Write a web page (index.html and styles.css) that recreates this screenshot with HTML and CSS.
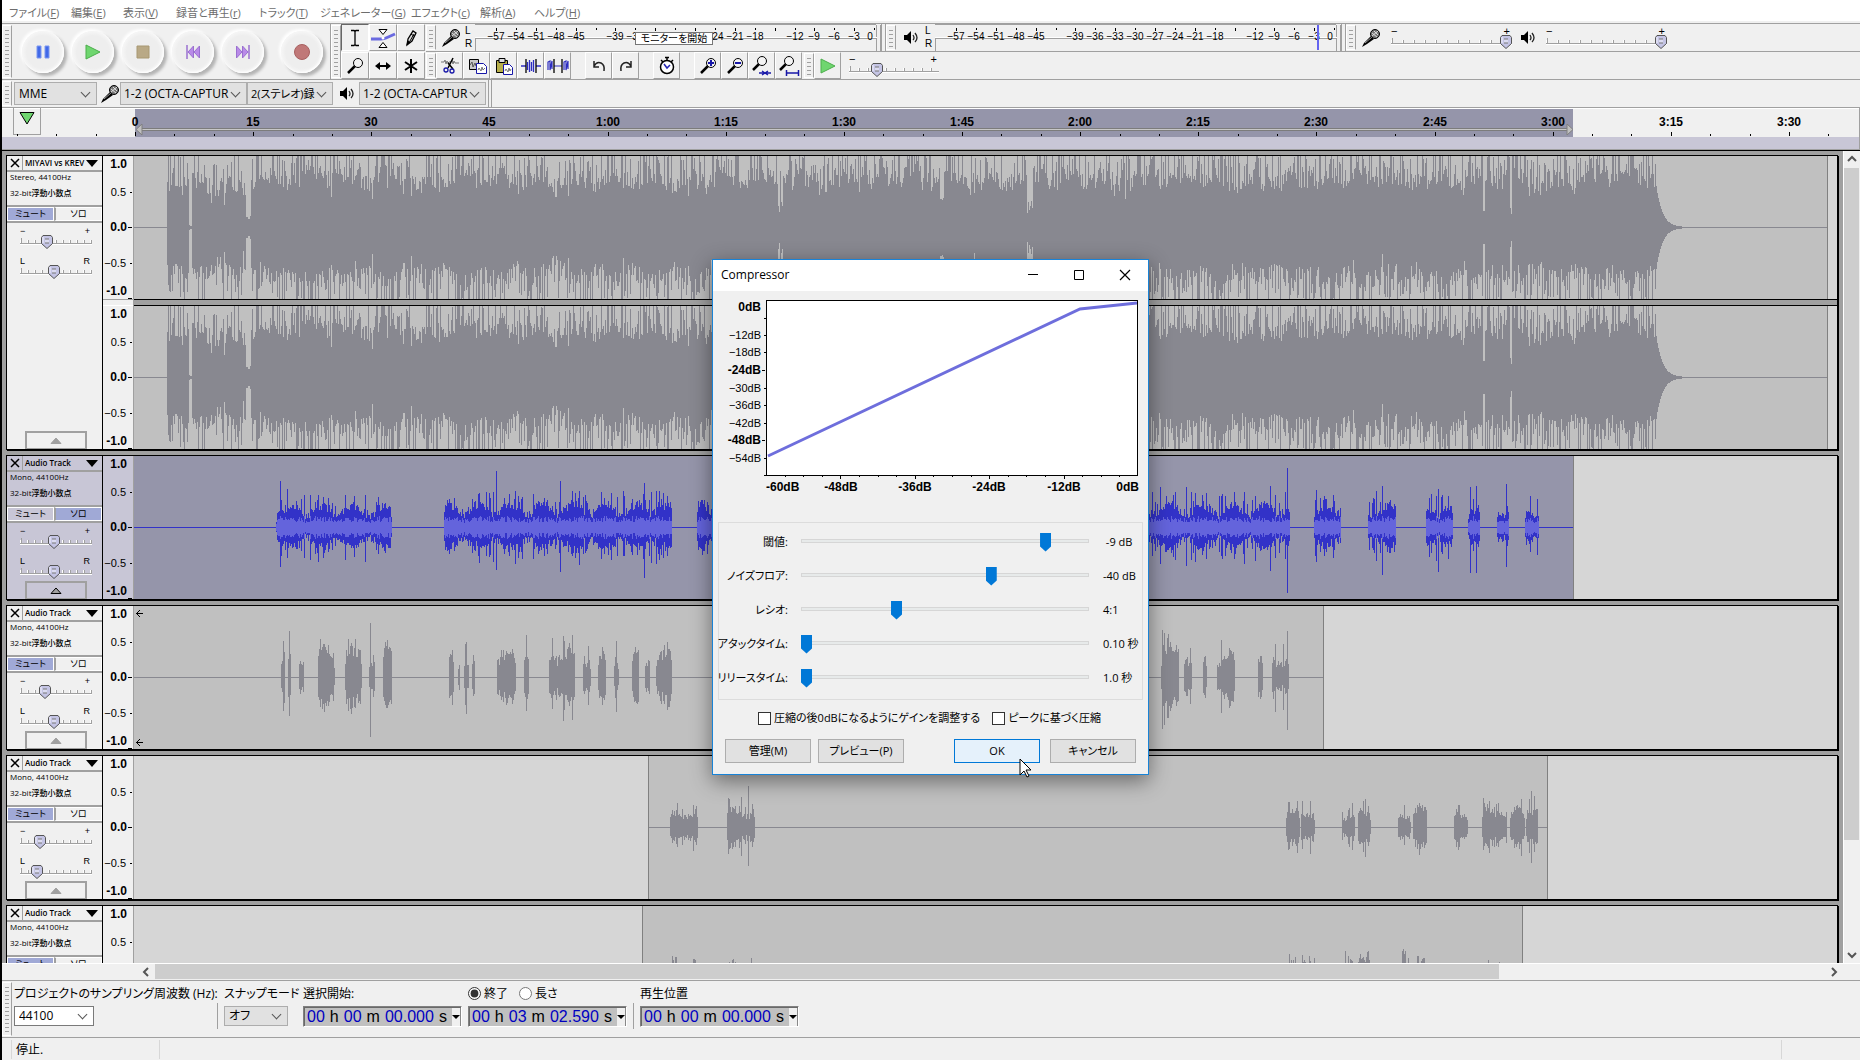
FILE: index.html
```html
<!DOCTYPE html>
<html lang="ja">
<head>
<meta charset="utf-8">
<title>Audio editor</title>
<link rel="stylesheet" href="styles.css">
</head>
<body>
<svg class="defs" aria-hidden="true">
  <symbol id="mic" viewBox="0 0 20 20"><path d="M1 19 3 15 10 8 13 11 6 16Z" fill="#000"/><path d="M4 15 11 9" stroke="#999"/><circle cx="14" cy="6" r="4.500" fill="#777" stroke="#000"/><path d="M11 5l5 4M13 3l4 4M11 8l6-5" stroke="#ddd"/></symbol>
  <symbol id="speaker" viewBox="0 0 16 14"><path d="M1 4h3l4-4v13L4 9H1Z" fill="#000"/><path d="M10 4q2 3 0 5M12 2q4 5 0 9" fill="none" stroke="#222" stroke-width="1.300"/></symbol>
  <symbol id="ibeam" viewBox="0 0 20 20"><path d="M6 2.500h3l1 1 1-1h3M6 17.500h3l1-1 1 1h3M10 3v14" fill="none" stroke="#000" stroke-width="1.300"/></symbol>
  <symbol id="envelope" viewBox="0 0 26 22"><path d="M1 12h10q3 0 5-1l9-4" fill="none" stroke="#6a6ae0" stroke-width="3"/><path d="M9 2.500h8l-4 5ZM9 20.500h8l-4-5Z" fill="#fff" stroke="#000"/><circle cx="13" cy="11" r="1.500" fill="#fff"/></symbol>
  <symbol id="pencil" viewBox="0 0 20 20"><path d="M6 17 7 11 12 3 15 5 11 13Z" fill="#ddd" stroke="#000" stroke-width="1.300"/><path d="M6 17 7 13 9 14ZM10 6l3 2M9 13l4-7" fill="#000" stroke="#000"/></symbol>
  <symbol id="lens" viewBox="0 0 20 20"><path d="M3 17 10 10" stroke="#000" stroke-width="2.500"/><circle cx="13" cy="7" r="4.500" fill="#f4f4f4" stroke="#000"/></symbol>
  <symbol id="shift" viewBox="0 0 20 20"><path d="M4 10h12" stroke="#000" stroke-width="2"/><path d="M2 10 7 6v8ZM18 10 13 6v8Z"/></symbol>
  <symbol id="multi" viewBox="0 0 20 20"><path d="M10 3v14M4 6l12 8M16 6 4 14" stroke="#000" stroke-width="2"/></symbol>
  <symbol id="cut" viewBox="0 0 22 20"><path d="M2 6h3l1-2 1 4 1-3 1 2 1-1h2l1-2 1 4 1-3 1 2h4" fill="none" stroke="#777"/><path d="M14 2 9 12M9 7l5 6" stroke="#000" stroke-width="1.500"/><circle cx="7" cy="14" r="2" fill="none" stroke="#1717a8" stroke-width="1.300"/><circle cx="13" cy="15" r="2" fill="none" stroke="#1717a8" stroke-width="1.300"/></symbol>
  <symbol id="copy" viewBox="0 0 22 20"><path d="M3.500 3.500h9v10h-9Z" fill="#c9c9c9" stroke="#000"/><path d="M4 9l2-3 1 5 2-4 1 3 2-2" fill="none" stroke="#555"/><path d="M10.500 7.500h7l3 3v7h-10Z" fill="#fff" stroke="#1717a8"/><path d="M12 14l1-2 2 3 1-4 1 3 2-2" fill="none" stroke="#777"/></symbol>
  <symbol id="paste" viewBox="0 0 22 20"><path d="M3.500 4.500h11v12h-11Z" fill="#b8b04a" stroke="#000"/><path d="M6 2.500h6v4H6Z" fill="#ddd" stroke="#000"/><path d="M10.500 8.500h6l3 3v7h-9Z" fill="#fff" stroke="#1717a8"/><path d="M12 15l1-2 2 3 1-4 1 3 1-2" fill="none" stroke="#777"/></symbol>
  <symbol id="trim" viewBox="0 0 22 20"><path d="M1 10h5M16 10h5M7.500 6v8M9.500 4v12M11.500 6v9M13.500 4v12" stroke="#2c2cc0" stroke-width="1.300"/><path d="M6 3v14M16 3v14" stroke="#000" stroke-width="1.300"/></symbol>
  <symbol id="silence" viewBox="0 0 22 20"><path d="M1 14V6l2-1v9l2-9v8M7 10h8M17 14V6l2-1v9l2-9v8" fill="none" stroke="#2c2cc0" stroke-width="1.200"/><path d="M7 3v14M15 3v14" stroke="#000" stroke-width="1.300"/></symbol>
  <symbol id="undo" viewBox="0 0 20 20"><path d="M5 10q3-5 7-3t3 8M5 5v6h5" fill="none" stroke="#222" stroke-width="1.500"/></symbol>
  <symbol id="redo" viewBox="0 0 20 20"><path d="M15 10q-3-5-7-3t-3 8M15 5v6h-5" fill="none" stroke="#222" stroke-width="1.500"/></symbol>
  <symbol id="watch" viewBox="0 0 20 20"><circle cx="10" cy="11" r="6.500" fill="#fff" stroke="#000" stroke-width="1.500"/><path d="M8 1.500h4M10 1v3M4 4l2 2M16 4l-2 2" stroke="#000" stroke-width="1.500"/><path d="M7 8l3 4 3-3" fill="none" stroke="#2525b5" stroke-width="1.500"/></symbol>
  <symbol id="plus" viewBox="0 0 20 20"><use href="#lens"/><path d="M10 7h6M13 4v6" stroke="#1717a8" stroke-width="2"/></symbol>
  <symbol id="minus" viewBox="0 0 20 20"><use href="#lens"/><path d="M10 7h6" stroke="#1717a8" stroke-width="2"/></symbol>
  <symbol id="fitsel" viewBox="0 0 22 22"><path d="M2 15 8 9" stroke="#000" stroke-width="2.500"/><circle cx="11" cy="6" r="4.500" fill="#f4f4f4" stroke="#000"/><path d="M8 18h12M11 16l3 2-3 2M17 16l-3 2 3 2" fill="none" stroke="#1717a8" stroke-width="1.300"/></symbol>
  <symbol id="fitall" viewBox="0 0 22 22"><path d="M2 15 8 9" stroke="#000" stroke-width="2.500"/><circle cx="11" cy="6" r="4.500" fill="#f4f4f4" stroke="#000"/><path d="M9 18h11M8.500 15v6M20.500 15v6" stroke="#1717a8" stroke-width="1.500"/></symbol>
  <symbol id="play" viewBox="0 0 16 16"><path d="M1 1 15 8 1 15Z" fill="#6fd66f" stroke="#4cae4c"/></symbol>
</svg>

<nav class="menu">
  <button>ファイル(<u>F</u>)</button>
  <button>編集(<u>E</u>)</button>
  <button>表示(<u>V</u>)</button>
  <button>録音と再生(<u>r</u>)</button>
  <button>トラック(<u>T</u>)</button>
  <button>ジェネレーター(<u>G</u>)</button>
  <button>エフェクト(<u>c</u>)</button>
  <button>解析(<u>A</u>)</button>
  <button>ヘルプ(<u>H</u>)</button>
</nav>

<header class="toolbars">
  <div class="transport">
    <span class="grip"></span>
    <div class="transport-buttons">
      <button aria-label="一時停止"><svg width="16" height="16"><path d="M2 2h4v12H2ZM10 2h4v12h-4Z" fill="#4169e8" stroke="#7c98f0"/></svg></button>
      <button aria-label="再生"><svg width="16" height="16"><use href="#play"/></svg></button>
      <button aria-label="停止"><svg width="16" height="16"><path d="M2 2h12v12H2Z" fill="#b9a986" stroke="#a89873"/></svg></button>
      <button aria-label="先頭へ"><svg width="16" height="16"><path d="M2 1v14" stroke="#9a70d0" stroke-width="1.500"/><path d="M8.500 2v12L3 8ZM14.500 2v12L9 8Z" fill="#b98ae8" stroke="#9a70d0"/></svg></button>
      <button aria-label="終端へ"><svg width="16" height="16"><path d="M14 1v14" stroke="#9a70d0" stroke-width="1.500"/><path d="M7.500 2v12L13 8ZM1.500 2v12L7 8Z" fill="#b98ae8" stroke="#9a70d0"/></svg></button>
      <button class="record" aria-label="録音"><svg width="18" height="18"><circle cx="9" cy="9" r="7.500" fill="#c07878" stroke="#a86060"/></svg></button>
    </div>
  </div>
  <div class="tools">
    <span class="grip"></span>
    <div class="tool-grid">
      <button class="cell pressed" aria-label="選択"><svg width="20" height="20"><use href="#ibeam"/></svg></button>
      <button class="cell" aria-label="エンベロープ"><svg width="26" height="22"><use href="#envelope"/></svg></button>
      <button class="cell" aria-label="ドロー"><svg width="20" height="20"><use href="#pencil"/></svg></button>
      <button class="cell" aria-label="ズーム"><svg width="20" height="20"><use href="#lens"/></svg></button>
      <button class="cell" aria-label="タイムシフト"><svg width="20" height="20"><use href="#shift"/></svg></button>
      <button class="cell" aria-label="マルチツール"><svg width="20" height="20"><use href="#multi"/></svg></button>
    </div>
  </div>
  <div class="bars">
    <div class="bar">
      <div class="meter">
        <span class="grip"></span>
        <span class="meter-icon"><svg width="20" height="20"><use href="#mic"/></svg></span>
        <span class="lr"><span>L</span><span>R</span></span>
        <svg class="scale" data-meter="record"></svg>
        <span class="tip">モニターを開始</span>
      </div>
      <div class="meter">
        <span class="grip"></span>
        <span class="meter-icon"><svg width="16" height="14"><use href="#speaker"/></svg></span>
        <span class="lr"><span>L</span><span>R</span></span>
        <svg class="scale" data-meter="play"></svg>
      </div>
      <div class="mixer">
        <span class="grip"></span>
        <svg class="mixer-mic" width="20" height="20"><use href="#mic"/></svg>
        <label class="knob wide"><span class="ends"><i>−</i><i>+</i></span><input type="range" min="0" max="100" value="100" aria-label="録音音量"></label>
        <svg class="mixer-speaker" width="16" height="14"><use href="#speaker"/></svg>
        <label class="knob wide"><span class="ends"><i>−</i><i>+</i></span><input type="range" min="0" max="100" value="100" aria-label="再生音量"></label>
      </div>
    </div>
    <div class="bar">
      <span class="grip"></span>
      <div class="edit">
        <button class="cell" aria-label="切り取り"><svg width="22" height="20"><use href="#cut"/></svg></button>
        <button class="cell" aria-label="コピー"><svg width="22" height="20"><use href="#copy"/></svg></button>
        <button class="cell" aria-label="貼り付け"><svg width="22" height="20"><use href="#paste"/></svg></button>
        <button class="cell" aria-label="トリム"><svg width="22" height="20"><use href="#trim"/></svg></button>
        <button class="cell" aria-label="無音化"><svg width="22" height="20"><use href="#silence"/></svg></button>
        <button class="cell spaced" aria-label="元に戻す"><svg width="20" height="20"><use href="#undo"/></svg></button>
        <button class="cell" aria-label="やり直す"><svg width="20" height="20"><use href="#redo"/></svg></button>
        <button class="cell spaced" aria-label="同期ロック"><svg width="20" height="20"><use href="#watch"/></svg></button>
        <button class="cell spaced" aria-label="拡大"><svg width="20" height="20"><use href="#plus"/></svg></button>
        <button class="cell" aria-label="縮小"><svg width="20" height="20"><use href="#minus"/></svg></button>
        <button class="cell" aria-label="選択範囲に合わせる"><svg width="22" height="22"><use href="#fitsel"/></svg></button>
        <button class="cell" aria-label="全体に合わせる"><svg width="22" height="22"><use href="#fitall"/></svg></button>
      </div>
      <span class="grip"></span>
      <button class="cell" aria-label="指定速度で再生"><svg width="16" height="16"><use href="#play"/></svg></button>
      <label class="knob speed"><span class="ends"><i>−</i><i>+</i></span><input type="range" min="0" max="100" value="28" aria-label="再生速度"></label>
    </div>
  </div>
</header>

<section class="devices">
  <span class="grip"></span>
  <span class="select host"><select aria-label="ホスト"><option>MME</option></select></span>
  <svg width="20" height="20"><use href="#mic"/></svg>
  <span class="select device"><select aria-label="録音デバイス"><option>1-2 (OCTA-CAPTUR</option></select></span>
  <span class="select channels"><select aria-label="録音チャンネル"><option>2(ステレオ)録</option></select></span>
  <svg class="out" width="16" height="14"><use href="#speaker"/></svg>
  <span class="select device"><select aria-label="再生デバイス"><option>1-2 (OCTA-CAPTUR</option></select></span>
  <span class="device-end"></span>
</section>

<section class="timeline">
  <button class="pin" aria-label="再生ヘッド固定"><svg width="18" height="14"><path d="M2 1.500h14L9 13Z" fill="#6fd66f" stroke="#000"/></svg></button>
  <svg class="time-scale"></svg>
</section>

<main class="workspace">
  <div class="tracks"></div>
  <div class="vscroll">
    <svg width="15" height="16"><path d="M4 10l4-4 4 4" fill="none" stroke="#555" stroke-width="2"/></svg>
    <span class="vthumb"></span>
    <svg width="15" height="16"><path d="M4 6l4 4 4-4" fill="none" stroke="#555" stroke-width="2"/></svg>
  </div>
</main>
<div class="hscroll">
  <svg width="17" height="15"><path d="M10 4 6 8l4 4" fill="none" stroke="#555" stroke-width="2"/></svg>
  <span class="hthumb"></span>
  <svg width="17" height="15"><path d="M6 4l4 4-4 4" fill="none" stroke="#555" stroke-width="2"/></svg>
</div>

<footer class="selection">
  <span class="grip"></span>
  <div class="field rate"><label for="rate">プロジェクトのサンプリング周波数 (Hz):</label><span class="select white"><select id="rate"><option>44100</option></select></span></div>
  <div class="field snap"><label for="snap">スナップモード</label><span class="select"><select id="snap"><option>オフ</option></select></span></div>
  <div class="field time"><span>選択開始:</span><div class="clock"><b>00</b><i>h</i><b>00</b><i>m</i><b>00.000</b><i>s</i><button aria-label="形式"></button></div></div>
  <div class="field time"><span class="choices"><label><input type="radio" name="end" checked>終了</label><label><input type="radio" name="end">長さ</label></span><div class="clock"><b>00</b><i>h</i><b>03</b><i>m</i><b>02.590</b><i>s</i><button aria-label="形式"></button></div></div>
  <div class="field time last"><span>再生位置</span><div class="clock"><b>00</b><i>h</i><b>00</b><i>m</i><b>00.000</b><i>s</i><button aria-label="形式"></button></div></div>
</footer>
<div class="status"><span class="state">停止.</span><span class="rest"></span></div>

<div class="dialog" role="dialog" aria-labelledby="dlg-title">
  <div class="titlebar">
    <span id="dlg-title">Compressor</span>
    <button aria-label="最小化"><svg width="12" height="12"><path d="M1 5.500h10" stroke="#000"/></svg></button>
    <button aria-label="最大化"><svg width="12" height="12"><path d="M1.500 1.500h9v9h-9Z" fill="none" stroke="#000"/></svg></button>
    <button aria-label="閉じる"><svg width="12" height="12"><path d="M1 1l10 10M11 1 1 11" stroke="#000" stroke-width="1.200"/></svg></button>
  </div>
  <svg class="curve" width="434" height="220"></svg>
  <div class="params">
    <label for="p1">閾値:</label><input id="p1" type="range" min="0" max="1000" value="863"><output>&nbsp;-9 dB</output>
    <label for="p2">ノイズフロア:</label><input id="p2" type="range" min="0" max="1000" value="667"><output>-40 dB</output>
    <label for="p3">レシオ:</label><input id="p3" type="range" min="0" max="1000" value="325"><output>4:1</output>
    <label for="p4">アタックタイム:</label><input id="p4" type="range" min="0" max="1000" value="0"><output>0.10 秒</output>
    <label for="p5">リリースタイム:</label><input id="p5" type="range" min="0" max="1000" value="0"><output>1.0 秒</output>
  </div>
  <div class="checks">
    <label><input type="checkbox">圧縮の後0dBになるようにゲインを調整する</label>
    <label><input type="checkbox">ピークに基づく圧縮</label>
  </div>
  <div class="actions">
    <button>管理(M)</button><button>プレビュー(P)</button><button class="primary">OK</button><button>キャンセル</button>
  </div>
  <svg class="cursor" width="14" height="21"><path d="M1 1v16l4-4 3 6 2-1-3-6h5Z" fill="#fff" stroke="#000"/></svg>
</div>
<script src="script.js"></script>
</body>
</html>
```
FILE: styles.css
```css
* { box-sizing: border-box; }
body {
  margin: 0; height: 100vh; display: flex; flex-direction: column; overflow: hidden;
  border-left: 2px solid #000; background: #f0f0f0; color: #000;
  font: 12px/16px "Open Sans", "Noto Sans CJK JP", sans-serif; font-feature-settings: "palt";
}
button, select, input { font: inherit; font-feature-settings: inherit; color: inherit; margin: 0; }
button { padding: 0; border: 0; background: none; display: flex; align-items: center; justify-content: center; }
svg { display: block; flex: none; }
i { font-style: normal; }
.defs { position: absolute; width: 0; height: 0; }

.menu { flex: none; height: 23px; padding: 2px 7px 0; background: linear-gradient(#fff 21px, #f0f0f0 21px); display: grid;
  grid-template-columns: 62px 52px 53px 83px 61px 91px 69px 54px 60px; color: #6d6d6d; align-items: center; font-size: 11px; }
.menu button { justify-content: flex-start; white-space: nowrap; }

.grip { flex: none; width: 10px; align-self: stretch; margin: 1px 0; border: 1px solid #fff; border-right-color: #a0a0a0;
  background: repeating-linear-gradient(#a0a0a0 0 1px, transparent 1px 4px) 2px 4px / 4px 100% no-repeat; }
.cell { width: 27px; height: 27px; flex: none; border: 1px solid; border-color: #fff #a0a0a0 #a0a0a0 #fff; }
.cell.pressed { border-color: #666 #fff #fff #666; }

.toolbars { flex: none; display: flex; }
.transport { display: flex; width: 329px; border-top: 1px solid #a0a0a0; border-right: 1px solid #a0a0a0; }
.transport-buttons { display: flex; padding-left: 6px; align-items: center; }
.transport-buttons button { width: 42px; height: 42px; margin: 0 4px; border-radius: 50%; background: radial-gradient(circle, #eee 55%, #f6f6f6 70%);
  box-shadow: 3px 3px 3px #b4b4b4, -2px -2px 3px #fff, inset -1px -1px 2px #fff; }
.transport-buttons .record { margin-left: 13px; }
.tools { display: flex; width: 95px; border-top: 1px solid #a0a0a0; }
.tool-grid { display: grid; grid-template-columns: repeat(3, 28px); grid-template-rows: 28px 27px; }
.tool-grid .cell { width: 28px; }
.bars { flex: 1; min-width: 0; }
.bar { height: 28px; border-top: 1px solid #a0a0a0; display: flex; align-items: center; }
.meter { position: relative; width: 460px; height: 27px; display: flex; align-items: center; border-right: 1px solid #a0a0a0; }
.meter-icon { width: 29px; display: flex; justify-content: center; }
.lr { width: 10px; height: 27px; display: flex; flex-direction: column; font: 10px/13px "Liberation Sans", sans-serif; }
.scale { width: 407px; height: 27px; font: 10px "Liberation Sans", sans-serif; border-right: 1px solid #a0a0a0; }
.tip { position: absolute; left: 209px; top: 8px; width: 78px; height: 13px; border: 1px solid #767676; background: #fff;
  font-size: 10px; line-height: 11px; text-align: center; }
.mixer { display: flex; align-items: center; height: 27px; }
.mixer-mic { margin: 0 10px 0 5px; }
.mixer-speaker { margin: 0 10px 0 8px; }

.knob { position: relative; display: block; height: 22px; }
.knob .ends { display: flex; justify-content: space-between; padding: 0 2px 0 0; height: 8px; font: 11px/8px "Liberation Sans", sans-serif; }
.knob input { appearance: none; display: block; width: 100%; height: 14px; outline: 0;
  background:
    linear-gradient(#a0a0a0, #a0a0a0) 0 8px / 100% 1px no-repeat,
    linear-gradient(#fff, #fff) 0 9px / 100% 1px no-repeat,
    linear-gradient(#a0a0a0, #a0a0a0) 1px 3px / 1px 5px no-repeat,
    repeating-linear-gradient(90deg, #fff 0 1px, #a0a0a0 1px 2px, transparent 2px var(--step)) 0 5px / 100% 3px no-repeat; }
.knob input::-webkit-slider-thumb { appearance: none; width: 12px; height: 14px;
  background: url("data:image/svg+xml,%3Csvg xmlns='http://www.w3.org/2000/svg' width='12' height='14'%3E%3Cpath d='M2 .5h8l1.500 2v6L6 13.500.5 8.500v-6Z' fill='%23c4c4e4' stroke='%23555'/%3E%3Cpath d='M2 2v6M4 5h4M4 7h4' stroke='%23f4f4ff'/%3E%3Cpath d='M4 4h4M4 8h4' stroke='%23777'/%3E%3C/svg%3E"); }
.knob.wide { width: 121px; --step: 11px; }
.knob.speed { width: 90px; margin-left: 8px; --step: 9px; }

.edit { display: flex; width: 368px; }
.edit .spaced { margin-left: 14px; }

.devices { flex: none; height: 28px; border-top: 1px solid #a0a0a0; display: flex; align-items: center; }
.select { position: relative; display: inline-block; }
.select::after { content: ""; position: absolute; right: 8px; top: 50%; width: 6px; height: 6px; margin-top: -5px;
  border: solid #555; border-width: 0 1px 1px 0; transform: rotate(45deg); pointer-events: none; }
.select select { appearance: none; display: block; width: 100%; height: 23px; padding: 0 4px; border: 1px solid #adadad; border-radius: 0; background: #e1e1e1; }
.host { width: 83px; margin: 0 3px 0 2px; }
.device { width: 127px; }
.device select { padding: 0 3px; }
.channels { width: 86px; }
.channels select { font-size: 11px; padding: 0 3px; }
.devices .out { margin: 0 4px 0 6px; }
.device-end { width: 4px; margin-left: 2px; align-self: stretch; border: solid #a0a0a0; border-width: 0 1px; }

.timeline { position: relative; flex: none; height: 43px; border-top: 1px solid #a0a0a0; border-bottom: 1px solid #a0a0a0; border-right: 1px solid #a0a0a0;
  background: linear-gradient(#fff 1px, #f0f0f0 1px 29px, #c8c6d6 29px); display: flex; }
.pin { width: 28px; height: 27px; margin-left: 11px; padding-bottom: 6px; border: solid #a0a0a0; border-width: 0 1px 1px; }
.time-scale { position: absolute; inset: 0; width: 100%; height: 41px; font: bold 12px "Liberation Sans", sans-serif; }

.workspace { flex: 1; min-height: 0; display: flex; border-top: 1px solid #000; background: #a0a0a0; }
.tracks { flex: 1; min-width: 0; padding: 4px 5px 0 4px; overflow: hidden; display: flex; flex-direction: column; gap: 5px; }
.track { flex: none; display: grid; grid-template-columns: 96px 31px 1fr; border: 1px solid #000; box-shadow: 1px 1px 0 #000; height: 145px; }
.track.stereo { height: 295px; }
.panel { background: #f0f0f0; border-right: 1px solid #000; display: flex; flex-direction: column; min-height: 0; }
.selected .panel, .selected .vruler { background: #c8c6d6; }
.head { display: flex; height: 16px; border-bottom: 2px solid #a0a0a0; }
.head button { height: 14px; }
.close { width: 16px; border-right: 1px solid #a0a0a0; }
.panel .name { flex: 1; justify-content: space-between; padding: 0 4px 0 2px; font-size: 8px; font-weight: 600; white-space: nowrap; overflow: hidden; }
.format { margin: -3px 0 0; padding: 0 3px; font-size: 8px; font-weight: 500; line-height: 16px; height: 34px; white-space: nowrap; }
.mutesolo { display: flex; height: 18px; border: solid #a0a0a0; border-width: 2px 0; margin-top: 2px; }
.mutesolo button { flex: 1; font-size: 9px; line-height: 12px; border: 1px solid #fff; }
.mutesolo button + button { border-left: 2px solid #a0a0a0; }
.mutesolo .on { background: #a0a9d6; }
.panel .knob { width: 72px; margin: 8px 0 0 13px; --step: 7px; }
.panel .mutesolo + .knob { margin-top: 4px; }
.panel .knob .ends { font-size: 9px; }
.collapse { width: 62px; height: 18px; margin: auto 0 0 18px; flex: none; border: 2px solid #a0a0a0; border-bottom-width: 1px; }
.vruler { background: #f0f0f0; border-right: 1px solid #a0a0a0; font: 12px "Liberation Sans", sans-serif; }
.vruler svg { width: 30px; height: 143px; }
.split { height: 7px; border-top: 1px solid #a0a0a0; border-bottom: 1px solid #fff; }
.waves { background: #d6d6d6; min-width: 0; overflow: hidden; }
.waves svg { width: 100%; height: 143px; }
.waves .split { border-color: #000; background: #a0a0a0; }

.vscroll { width: 17px; border-left: 1px solid #fff; background: #f0f0f0; display: flex; flex-direction: column; }
.vthumb { flex: none; height: 82.7%; background: #cdcdcd; margin: 1px 1px auto 0; }
.hscroll { flex: none; height: 17px; border-top: 1px solid #fff; background: #f0f0f0; padding: 0 17px 0 136px; display: flex; }
.hthumb { width: 78.8%; margin-right: auto; background: #cdcdcd; height: 15px; }

.selection { flex: none; height: 57px; border-top: 1px solid #a0a0a0; display: flex; }
.field { padding: 5px 0 0 7px; display: flex; flex-direction: column; gap: 5px; align-items: flex-start; line-height: 15px; white-space: nowrap; }
.field select { height: 20px; line-height: 16px; font-size: 12px; }
.rate { width: 205px; padding-left: 2px; }
.rate .select { width: 80px; }
.white select { background: #fff; border-color: #7a7a7a; }
.snap { width: 86px; }
.snap .select { width: 64px; }
.time { width: 165px; }
.time:not(.last) { padding-left: 0; }
.snap, .last { background: linear-gradient(#a0a0a0, #a0a0a0) 0 22px / 1px 26px no-repeat; }
.choices { display: flex; gap: 11px; }
.choices label { display: flex; align-items: center; gap: 3px; }
.choices input { width: 13px; height: 13px; accent-color: #333; }
.clock { width: 159px; height: 21px; display: flex; justify-content: space-between; align-items: center; padding-left: 3px; background: #c0c0c0;
  border: 1px solid; border-color: #808080 #fff #fff #808080; box-shadow: inset 1px 1px 0 #696969; font: 16px/18px "Liberation Sans", sans-serif; }
.clock b { font-weight: 400; color: #0000c0; }
.clock button { width: 9px; height: 18px; background: #f0f0f0; border-right: 1px solid #888; }
.clock button::after { content: ""; border: 4px solid transparent; border-top-color: #000; border-bottom: 0; }
.status { flex: none; height: 23px; border-top: 1px solid #a0a0a0; display: flex; padding: 2px 0 1px 9px; line-height: 20px; }
.state { width: 149px; padding-left: 4px; border: solid #d7d7d7; border-width: 0 1px; }
.rest { flex: 1; margin-right: 78px; border-right: 1px solid #d7d7d7; }

.dialog { position: absolute; left: 712px; top: 259px; width: 437px; border: 1px solid #1883d7; background: #f0f0f0; box-shadow: 0 6px 20px rgba(0, 0, 0, .45); padding-bottom: 11px; }
.titlebar { height: 31px; background: #fff; display: flex; align-items: center; padding: 0 0 2px 8px; }
.titlebar span { flex: 1; }
.titlebar button { width: 46px; height: 29px; }
.curve { font: 12px "Liberation Sans", sans-serif; }
.params { margin: 11px 5px 0; padding: 2px 0 4px; border: 1px solid #dcdcdc; display: grid; grid-template-columns: 69px 288px 1fr; column-gap: 13px; grid-auto-rows: 34px; align-items: center; white-space: nowrap; }
.params label { text-align: right; justify-self: end; font-size: 11px; }
.params output { font-size: 11px; padding-left: 1px; }
.params input { appearance: none; width: 288px; height: 20px; outline: 0; background: linear-gradient(#e7eaea, #e7eaea) 1px 8px / 286px 2px no-repeat, linear-gradient(#d6d6d6, #d6d6d6) 0 7px / 100% 4px no-repeat; }
.params input::-webkit-slider-thumb { appearance: none; width: 11px; height: 19px; background: #0078d7; clip-path: polygon(0 0, 100% 0, 100% 74%, 50% 100%, 0 74%); }
.checks { display: flex; gap: 12px; padding-left: 45px; margin-top: 10px; white-space: nowrap; font-size: 11px; }
.checks label { display: flex; align-items: center; gap: 3px; }
.checks input { appearance: none; width: 13px; height: 13px; border: 1px solid #333; background: #fff; }
.actions { display: flex; padding: 13px 12px 0 12px; gap: 7px; font-size: 11px; }
.actions button { width: 86px; height: 24px; border: 1px solid #adadad; background: #e1e1e1; }
.actions .primary { margin: 0 3px 0 auto; border-color: #0078d7; background: #e5f1fb; }
.cursor { position: absolute; left: 306px; top: 498px; }
```
FILE: script.js
```js
// Repeatable noise, so that every load draws the same waves.
let seed = 7;
const rnd = () => (seed = (seed * 16807) % 2147483647) / 2147483647;
const MID = 71;
const line = (x, up, down) => `M${x}.5 ${(MID - up).toFixed(0)}V${(MID + 1 + down).toFixed(0)}`;

// Full mix: dense body with quiet notches and a fading tail.
function mix() {
  let d = '';
  const notches = [[189, 191, 2], [246, 250, 14], [778, 779, 22], [781, 782, 32], [940, 943, 30], [1027, 1032, 28], [1483, 1484, 24], [1510, 1511, 26]];
  for (let x = 167; x < 1682; x++) {
    const swell = 3 * Math.sin(x / 23) + 4 * Math.sin(x / 6);
    const low = x < 250 ? 32 : x > 540 && x < 640 ? 34 : 38;
    let up = low + swell + rnd() * 20, down = low + swell + rnd() * 20;
    const beat = rnd();
    if (beat < .32) { up += 8 + rnd() * 30; down += 8 + rnd() * 30; }
    else if (beat < .42) up += rnd() * 30;
    else if (beat < .52) down += rnd() * 30;
    else if (beat < .56) { up -= 8; down -= 8; }
    if (x > 1655) up = down = 48 * Math.exp(-(x - 1655) / 6);
    const n = notches.find(([a, b]) => x >= a && x <= b);
    if (n) up = down = n[2] * (.5 + rnd() / 2);
    d += line(x, Math.min(71, up), Math.min(71, down));
  }
  return d;
}

// Voice: separate phrases [from, to, peak] plus single peaks [x, up, down].
function voice(phrases, peaks = []) {
  let outer = '', inner = '';
  for (const [a, b, amp] of phrases) {
    for (let x = a; x <= b; x++) {
      const edge = Math.min(1, (Math.min(x - a, b - x) + 2) / 3);
      let v = amp * (.4 + .3 * rnd() + .15 * Math.sin(x / 5)) * edge;
      if (rnd() < .22) v = amp * (.7 + .4 * rnd()) * edge;
      const w = v * (.75 + .3 * rnd());
      outer += line(x, v, w);
      const k = Math.min(v * .5, 5 + 6 * rnd());
      inner += line(x, k, k);
    }
  }
  for (const [x, up, down] of peaks) outer += line(x, up, down);
  return { outer, inner };
}

const lead = voice([
  [276, 391, 30], [444, 671, 33], [697, 1149, 33], [1150, 1289, 32], [1314, 1340, 29], [1368, 1395, 33],
  [1426, 1452, 30], [1468, 1479, 32], [1497, 1508, 28], [1525, 1538, 28]
], [[280, 46, 39], [287, 38, 30], [318, 32, 34], [496, 56, 42], [560, 46, 44], [644, 44, 50], [1160, 40, 36], [1186, 40, 38], [1270, 41, 43], [1287, 59, 65], [1316, 37, 34], [1382, 41, 47], [1438, 38, 44], [1470, 40, 45], [1476, 41, 45], [1506, 43, 39]]);
const second = voice([
  [281, 284, 36], [288, 290, 46], [299, 303, 40], [318, 334, 40], [345, 361, 38], [369, 374, 38], [383, 391, 42],
  [449, 453, 36], [458, 459, 34], [464, 468, 34], [472, 474, 34], [497, 515, 36], [524, 528, 50], [549, 574, 40], [583, 590, 36],
  [598, 605, 32], [614, 618, 34], [632, 638, 38], [645, 649, 30], [656, 671, 36], [1161, 1178, 42], [1184, 1191, 38], [1203, 1206, 28], [1217, 1234, 36], [1258, 1262, 30], [1272, 1288, 34]
], [[289, 46, 38], [370, 54, 59], [1162, 47, 51], [1168, 43, 40], [1287, 46, 52]]);
const third = voice([
  [670, 697, 24], [727, 754, 27], [1286, 1299, 24], [1301, 1314, 26], [1342, 1354, 22], [1358, 1370, 26], [1398, 1410, 23],
  [1413, 1426, 28], [1454, 1467, 22], [1482, 1506, 28], [1510, 1524, 26], [1526, 1537, 34]
], [[748, 41, 38], [1302, 26, 21], [1363, 26, 24], [1419, 24, 27], [1531, 35, 35]]);
const fourth = voice([
  [671, 696, 24], [726, 752, 22], [1288, 1296, 22], [1301, 1314, 30], [1344, 1353, 28], [1358, 1370, 30], [1400, 1410, 26], [1414, 1425, 26], [1484, 1500, 16]
]);

const X = '<svg width="10" height="10"><path d="M1 1l8 8M9 1 1 9" stroke="#000" stroke-width="1.500"/></svg>';
const tri = '<svg width="12" height="7"><path d="M0 0h12L6 7Z"/></svg>';

function scale() {
  const rows = [['1.0', 13, 1], ['0.5', 41, 0], ['0.0', 76, 1], ['−0.5', 112, 0], ['-1.0', 140, 1]];
  return '<svg>' + rows.map(([t, y, bold]) => bold
    ? `<text x="24" y="${y - 1}" text-anchor="end" font-weight="bold">${t}</text>`
    : `<text x="23" y="${y - 1}" text-anchor="end" font-size="11">${t}</text><path d="M27 ${y - 4.5}h2" stroke="#000"/>`).join('')
    + '<path d="M25 71.500h4M25 142.500h4" stroke="#000"/></svg>';
}

// Wave coordinates are measured from the window; the wave column starts at 134.
function wave({ from, to, path, selected, arrows }) {
  const bg = selected ? '#9595aa' : '#c0c0c0', ink = selected ? '#3232c8' : '#888890';
  return `<svg shape-rendering="crispEdges"><g transform="translate(-134 0)">
    <rect x="${from}" y="0" width="${to - from}" height="143" fill="${bg}"/>
    <path d="M${from} 71.500H${to}" stroke="${ink}"/>
    <path d="M${to}.5 0v143${from > 134 ? `M${from}.5 0v143` : ''}" stroke="#808080"/>
    <path d="${path.outer || path}" stroke="${ink}"/>
    ${selected ? `<path d="${path.inner}" stroke="#6464dc"/>` : ''}
    ${arrows ? '<path d="M137 7.500h6M140 4l-3 3.500 3 3.500M137 136.500h6M140 133l-3 3.500 3 3.500" fill="none" stroke="#000"/>' : ''}
  </g></svg>`;
}

const full = mix();
const tracks = [
  { name: 'MIYAVI vs KREV', kind: 'Stereo', stereo: true, gain: 35, pan: 47, from: 134, to: 1827, path: full },
  { name: 'Audio Track', kind: 'Mono', selected: true, gain: 47, pan: 47, from: 134, to: 1573, path: lead },
  { name: 'Audio Track', kind: 'Mono', gain: 32, pan: 47, from: 134, to: 1323, path: second, arrows: true },
  { name: 'Audio Track', kind: 'Mono', gain: 23, pan: 18, from: 648, to: 1547, path: third },
  { name: 'Audio Track', kind: 'Mono', gain: 47, pan: 47, from: 642, to: 1522, path: fourth }
];
document.querySelector('.tracks').innerHTML = tracks.map(t => `
  <article class="track ${t.stereo ? 'stereo' : ''} ${t.selected ? 'selected' : ''}">
    <div class="panel">
      <div class="head"><button class="close" aria-label="閉じる">${X}</button><button class="name">${t.name}${tri}</button></div>
      <p class="format">${t.kind}, 44100Hz<br>32-bit浮動小数点</p>
      <div class="mutesolo"><button class="${t.selected ? '' : 'on'}">ミュート</button><button class="${t.selected ? 'on' : ''}">ソロ</button></div>
      <label class="knob"><span class="ends"><i>−</i><i>+</i></span><input type="range" value="${t.gain}" aria-label="ゲイン"></label>
      <label class="knob"><span class="ends"><i>L</i><i>R</i></span><input type="range" value="${t.pan}" aria-label="パン"></label>
      <button class="collapse" aria-label="折りたたむ"><svg width="12" height="7"><path d="M1 6.500 6 1l5 5.500Z" fill="#a0a0a0" stroke="${t.selected ? '#000' : '#a0a0a0'}"/></svg></button>
    </div>
    <div class="vruler">${scale()}${t.stereo ? '<div class="split"></div>' + scale() : ''}</div>
    <div class="waves">${wave(t)}${t.stereo ? '<div class="split"></div>' + wave(t) : ''}</div>
  </article>`).join('');

// Level meters: a tick every 3 dB, 20px apart.
document.querySelectorAll('.scale').forEach(el => {
  let s = '<path d="M.5 27V15M0 .5h401M401.500 1v26M405.500 1v26" stroke="#a0a0a0" fill="none"/><path d="M0 13.500h402" stroke="#fff"/><path d="M0 14.500h402" stroke="#a0a0a0"/>';
  for (let i = 0; i < 20; i++) {
    const db = 57 - i * 3, x = 21 + Math.round(i * 19.9);
    s += `<path d="M${x}.5 4v${i % 2 ? 2 : 3}" stroke="#000"/>`;
    if (db !== 42 && db !== 15) s += `<text x="${db ? x : x - 4}" y="16" text-anchor="middle">${db ? '−' + db : 0}</text>`;
  }
  if (el.dataset.meter === 'play') s += '<path d="M383 1v25" stroke="#6464f0" stroke-width="2"/>';
  el.innerHTML = s;
});

// Timeline: a label every 15 s, a tick every 5 s.
{
  let s = '<rect x="133" y="1" width="1438" height="28" fill="#9595aa"/><path d="M136 20.500H1568M136 22.500H1568" stroke="#7c7c7c"/><path d="M136 21.500H1568" stroke="#c8c8c8"/><path d="M140 16v11l-6-5.500ZM1565 16v11l6-5.500Z" fill="#c0c0c0" stroke="#808080"/>';
  for (let i = -3; i < 44; i++) {
    const x = 133 + Math.round(i * 39.38), major = i % 3 === 0 && i >= 0, sec = i * 5;
    s += `<path d="M${x}.5 ${major ? 24 : 26}V28" stroke="#000"/>`;
    if (major) {
      const t = sec < 60 ? sec : `${Math.floor(sec / 60)}:${String(sec % 60).padStart(2, '0')}`;
      s += `<text x="${x}" y="18" text-anchor="middle">${t}</text>`;
    }
  }
  document.querySelector('.time-scale').innerHTML = s;
}

// Compressor transfer curve.
{
  let s = '<rect x="53.500" y="9.500" width="371" height="175" fill="#fff" stroke="#000"/><path d="M55 165 367 18 424 12" fill="none" stroke="#6e6edc" stroke-width="3"/>';
  const y = [[0, 16], [6, 27], [12, 44], [18, 61], [24, 79], [30, 97], [36, 114], [42, 132], [48, 149], [54, 167], [60, 184]];
  for (const [db, p] of y) {
    const bold = db % 24 === 0;
    if (db) s += `<path d="M${bold ? 49 : 51} ${p}.5h3" stroke="#000"/>`;
    if (db !== 6 && db !== 60) s += `<text x="48" y="${p + 4}" text-anchor="end" ${bold ? 'font-weight="bold"' : 'font-size="11"'}>${db ? (bold ? '-' : '−') + db : 0}dB</text>`;
  }
  for (let i = 1; i < 20; i++) s += `<path d="M${53 + Math.round(i * 18.6)}.5 185v${i % 4 ? 1 : 3}" stroke="#000"/>`;
  [[-60, 53, 'start'], [-48, 128, 'middle'], [-36, 202, 'middle'], [-24, 276, 'middle'], [-12, 351, 'middle'], [0, 426, 'end']]
    .forEach(([db, x, a]) => s += `<text x="${x}" y="200" text-anchor="${a}" font-weight="bold">${db}dB</text>`);
  document.querySelector('.curve').innerHTML = s;
}
```
